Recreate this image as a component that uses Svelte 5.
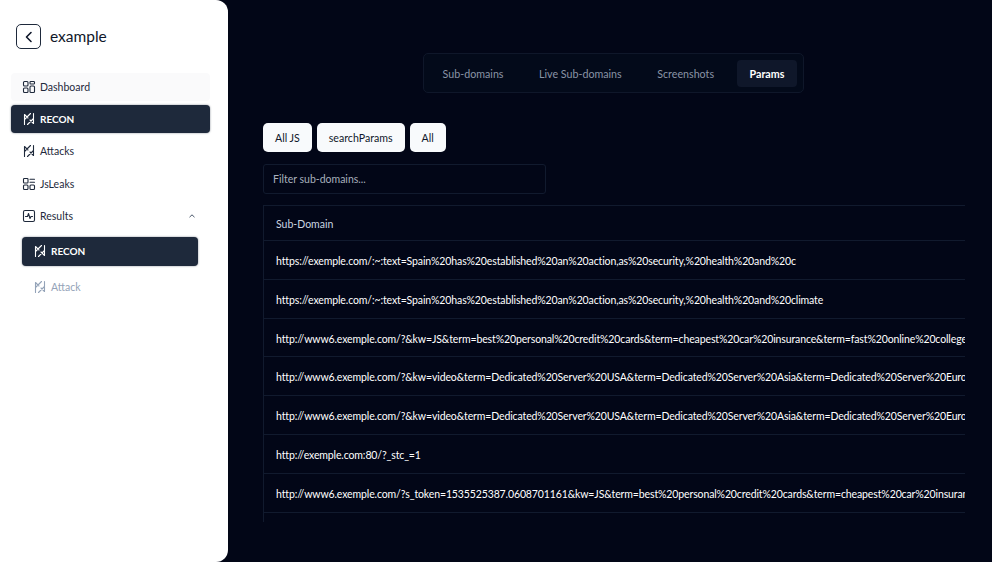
<script>
	const nav = [
		{ label: 'Dashboard', icon: 'grid', hover: true },
		{ label: 'RECON', icon: 'slash', active: true },
		{ label: 'Attacks', icon: 'slash' },
		{ label: 'JsLeaks', icon: 'grid2' }
	];

	const tabs = ['Sub-domains', 'Live Sub-domains', 'Screenshots', 'Params'];
	const filters = ['All JS', 'searchParams', 'All'];

	const rows = [
		'https://exemple.com/:~:text=Spain%20has%20established%20an%20action,as%20security,%20health%20and%20c',
		'https://exemple.com/:~:text=Spain%20has%20established%20an%20action,as%20security,%20health%20and%20climate',
		'http://www6.exemple.com/?&kw=JS&term=best%20personal%20credit%20cards&term=cheapest%20car%20insurance&term=fast%20online%20college%20degrees',
		'http://www6.exemple.com/?&kw=video&term=Dedicated%20Server%20USA&term=Dedicated%20Server%20Asia&term=Dedicated%20Server%20Europe',
		'http://www6.exemple.com/?&kw=video&term=Dedicated%20Server%20USA&term=Dedicated%20Server%20Asia&term=Dedicated%20Server%20Europe',
		'http://exemple.com:80/?_stc_=1',
		'http://www6.exemple.com/?s_token=1535525387.0608701161&kw=JS&term=best%20personal%20credit%20cards&term=cheapest%20car%20insurance'
	];
</script>

{#snippet icon(name)}
	<svg class="icon" viewBox="0 0 14 14" fill="none" stroke="currentColor" stroke-width="1.1" stroke-linecap="round" stroke-linejoin="round">
		{#if name === 'grid'}
			<rect x="1.5" y="1.5" width="4.5" height="4.5" rx="1" />
			<rect x="8" y="1.5" width="4.5" height="2.5" rx="0.8" />
			<rect x="1.5" y="8" width="4.5" height="4.5" rx="1" />
			<rect x="8" y="6" width="4.5" height="6.5" rx="1" />
		{:else if name === 'grid2'}
			<rect x="1.5" y="1.5" width="4.5" height="4.5" rx="0.8" />
			<path d="M8 2.2h4.5M8 5.2h4.5" />
			<rect x="1.5" y="8" width="4.5" height="4.5" rx="1" />
			<rect x="8" y="8" width="4.5" height="4.5" rx="1" />
		{:else if name === 'slash'}
			<path d="M2.5 12.5V2.5L6 6M11.5 1.5v10L8 8M2.5 7.5l6-6M5.5 12.5l6-6" />
		{:else if name === 'chart'}
			<rect x="1.5" y="1.5" width="11" height="11" rx="1.5" />
			<path d="M3.5 7.5h2l1-3 1.5 5 1-2h1.5" />
		{/if}
	</svg>
{/snippet}

<div class="page">
	<aside class="sidebar">
		<header class="brand">
			<button class="back" aria-label="Back">
				<svg viewBox="0 0 14 14" width="14" height="14" fill="none" stroke="currentColor" stroke-width="1.6" stroke-linecap="round" stroke-linejoin="round">
					<path d="M9 2.5L4.5 7L9 11.5" />
				</svg>
			</button>
			<span class="title">example</span>
		</header>

		<nav class="nav">
			{#each nav as item}
				<div class="item" class:active={item.active} class:hover={item.hover}>
					{@render icon(item.icon)}
					<span>{item.label}</span>
				</div>
			{/each}

			<div class="item">
				{@render icon('chart')}
				<span>Results</span>
				<svg class="chev" viewBox="0 0 10 10" fill="none" stroke="currentColor" stroke-width="1">
					<path d="M2.5 6.2L5 3.8l2.5 2.4" />
				</svg>
			</div>

			<div class="sub">
				<div class="item active">
					{@render icon('slash')}
					<span>RECON</span>
				</div>
				<div class="item muted">
					{@render icon('slash')}
					<span>Attack</span>
				</div>
			</div>
		</nav>
	</aside>

	<main class="main">
		<div class="tabs-wrap">
			<div class="tabs">
				{#each tabs as tab}
					<div class="tab" class:current={tab === 'Params'}>{tab}</div>
				{/each}
			</div>
		</div>

		<div class="filters">
			{#each filters as f}
				<button class="filter">{f}</button>
			{/each}
		</div>

		<input class="search" placeholder="Filter sub-domains..." />

		<div class="table">
			<div class="row head">Sub-Domain</div>
			{#each rows as row}
				<div class="row">{row}</div>
			{/each}
			<div class="tail"></div>
		</div>
	</main>
</div>

<style>
	:global(body) {
		margin: 0;
		background: #fff;
	}

	.page {
		width: 992px;
		height: 562px;
		display: flex;
		background: #020617;
		font-family: Lato, 'Liberation Sans', sans-serif;
		overflow: hidden;
	}

	.sidebar {
		width: 228px;
		flex: none;
		box-sizing: border-box;
		background: #fff;
		border-radius: 0 12px 12px 0;
		padding: 24px 18px 0 11px;
		color: #0f172a;
	}

	.brand {
		display: flex;
		align-items: center;
		gap: 9px;
		padding-left: 5px;
		height: 25px;
		margin-bottom: 23.5px;
	}

	.back {
		width: 25px;
		height: 25px;
		padding: 0;
		display: flex;
		align-items: center;
		justify-content: center;
		background: #fff;
		border: 1px solid #1e293b;
		border-radius: 5px;
		color: #0f172a;
	}

	.title {
		font-size: 15.5px;
		line-height: 25px;
	}

	.nav {
		display: flex;
		flex-direction: column;
		gap: 3.6px;
	}

	.item {
		display: flex;
		align-items: center;
		gap: 4px;
		height: 28.7px;
		padding-left: 11px;
		border-radius: 4px;
		font-size: 10.5px;
		color: #1e293b;
	}

	.item.hover {
		background: #fafafb;
	}

	.item.active {
		background: #1e293b;
		color: #fff;
		font-weight: 700;
		font-size: 10px;
		box-shadow: 0 0 2px rgba(30, 41, 59, 0.6);
	}

	.item.muted {
		color: #94a3b8;
	}

	.icon {
		width: 14px;
		height: 14px;
		flex: none;
	}

	.chev {
		width: 10px;
		height: 10px;
		margin-left: auto;
		margin-right: 13px;
		color: #475569;
	}

	.sub {
		display: flex;
		flex-direction: column;
		gap: 7px;
		padding: 0 12px 0 11px;
		margin-top: 3px;
	}

	.main {
		flex: 1;
		min-width: 0;
		padding: 53px 27px 0 35px;
		color: #f8fafc;
	}

	.tabs-wrap {
		display: flex;
		justify-content: center;
		margin-left: -1px;
		margin-bottom: 30px;
	}

	.tabs {
		display: flex;
		align-items: center;
		gap: 10.5px;
		height: 40px;
		box-sizing: border-box;
		padding: 0 6px;
		background: #030a1a;
		border: 1px solid #0f172a;
		border-radius: 5px;
	}

	.tab {
		padding: 0 12.5px;
		height: 27px;
		line-height: 27px;
		font-size: 10.7px;
		color: #8a94a6;
		border-radius: 4px;
	}

	.tab.current {
		background: #0f172a;
		color: #fff;
		font-weight: 700;
	}

	.filters {
		display: flex;
		gap: 5px;
		margin-bottom: 12px;
	}

	.filter {
		height: 29px;
		padding: 1px 12px 0;
		background: #f8fafc;
		border: 0;
		border-radius: 5px;
		font-family: inherit;
		font-size: 10.6px;
		color: #0f172a;
	}

	.search {
		display: block;
		width: 283px;
		height: 30px;
		box-sizing: border-box;
		padding: 0 9px;
		background: transparent;
		border: 1px solid #111a2e;
		border-radius: 3px;
		font-family: inherit;
		font-size: 10.5px;
		color: #f8fafc;
		outline: none;
		margin-bottom: 11px;
	}

	.search::placeholder {
		color: #a8b0bd;
		opacity: 1;
	}

	.table {
		width: 701px;
		overflow: hidden;
		border-left: 1px solid #111a2e;
		border-top: 1px solid #111a2e;
	}

	.row {
		height: 38.8px;
		box-sizing: border-box;
		padding: 0 0 0 12px;
		line-height: 40px;
		font-size: 10.5px;
		letter-spacing: -0.12px;
		white-space: nowrap;
		overflow: hidden;
		border-bottom: 1px solid #111a2e;
		color: #fff;
	}

	.row.head {
		height: 35px;
		line-height: 37px;
		color: #cbd5e1;
		letter-spacing: 0;
	}

	.tail {
		height: 9px;
	}
</style>
